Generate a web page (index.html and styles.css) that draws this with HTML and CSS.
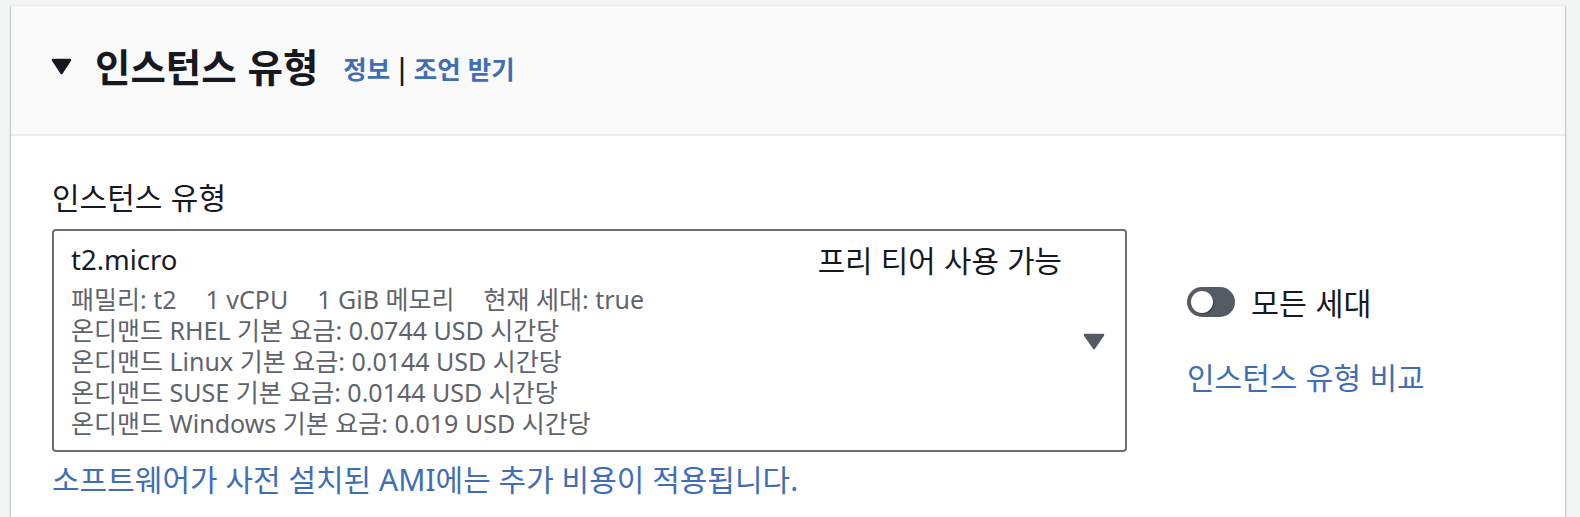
FILE: index.html
```html
<!DOCTYPE html>
<html lang="ko">
<head>
<meta charset="utf-8">
<title>인스턴스 유형</title>
<link rel="stylesheet" href="styles.css">
</head>
<body>
<section class="card">
  <header class="card-header">
    <svg class="expand-icon" width="21" height="17" viewBox="0 0 21 17" aria-hidden="true">
      <polygon points="2,2 19,2 10.5,15" fill="#16191f" stroke="#16191f" stroke-width="2.5" stroke-linejoin="round"/>
    </svg>
    <h2 class="title">인스턴스 유형</h2>
    <span class="header-links"><a class="link-strong" href="#">정보</a><span class="sep">|</span><a class="link-strong" href="#">조언 받기</a></span>
  </header>
  <div class="card-body">
    <div class="field-label">인스턴스 유형</div>
    <div class="field-row">
      <div class="field-main">
        <div class="select">
          <div class="select-main">
            <div class="select-top">
              <span class="select-value">t2.micro</span>
              <span class="select-tag">프리 티어 사용 가능</span>
            </div>
            <div class="select-detail">
              <div class="detail-tags"><span>패밀리: t2</span><span>1 vCPU</span><span>1 GiB 메모리</span><span>현재 세대: true</span></div>
              <div>온디맨드 RHEL 기본 요금: 0.0744 USD 시간당</div>
              <div>온디맨드 Linux 기본 요금: 0.0144 USD 시간당</div>
              <div>온디맨드 SUSE 기본 요금: 0.0144 USD 시간당</div>
              <div>온디맨드 Windows 기본 요금: 0.019 USD 시간당</div>
            </div>
          </div>
          <div class="caret-box">
            <svg width="22" height="17" viewBox="0 0 22 17" aria-hidden="true">
              <polygon points="2,2 20,2 11,15" fill="#545b64" stroke="#545b64" stroke-width="2.5" stroke-linejoin="round"/>
            </svg>
          </div>
        </div>
        <a class="link" href="#">소프트웨어가 사전 설치된 AMI에는 추가 비용이 적용됩니다.</a>
      </div>
      <div class="field-side">
        <label class="toggle-row">
          <span class="toggle"><span class="knob"></span></span>
          <span class="toggle-label">모든 세대</span>
        </label>
        <a class="link" href="#">인스턴스 유형 비교</a>
      </div>
    </div>
  </div>
</section>
</body>
</html>
```

FILE: styles.css
```css
html, body {
  margin: 0;
  padding: 0;
}
body {
  background: #f2f3f3;
  font-family: "Noto Sans", "Noto Sans CJK KR", sans-serif;
  color: #16191f;
  padding: 5px 15px 0 11px;
  height: 512px;
  overflow: hidden;
}
a {
  text-decoration: none;
}
.card {
  background: #ffffff;
  box-shadow: 0 1px 1px 0 rgba(0, 28, 36, 0.3), 1px 1px 1px 0 rgba(0, 28, 36, 0.15), -1px 1px 1px 0 rgba(0, 28, 36, 0.15);
  border-top: 1px solid #eaeded;
  min-height: 520px;
}
.card-header {
  background: #fafafa;
  border-bottom: 2px solid #eaeded;
  display: flex;
  align-items: center;
  height: 130px;
  padding: 0 0 10px 40px;
  box-sizing: border-box;
}
.expand-icon {
  display: block;
  margin-right: 23px;
  margin-top: 2px;
}
.title {
  margin: 0;
  font-size: 38.5px;
  font-weight: 700;
  line-height: 46px;
  font-family: "Noto Sans CJK KR", sans-serif;
}
.header-links {
  margin-left: 25px;
  margin-top: 6px;
  font-size: 25.5px;
  font-weight: 700;
  line-height: 34px;
  font-family: "Noto Sans CJK KR", sans-serif;
}
.link-strong {
  color: #3f6eb6;
}
.sep {
  color: #16191f;
  margin: 0 8px;
}
.card-body {
  padding: 42px 40px 0 41px;
}
.field-label {
  font-size: 30px;
  line-height: 36px;
  font-family: "Noto Sans CJK KR", sans-serif;
  margin-bottom: 15px;
}
.field-row {
  display: flex;
  align-items: flex-start;
}
.field-main {
  width: 1075px;
}
.select {
  border: 2px solid #687078;
  border-radius: 4px;
  display: flex;
  align-items: center;
  padding: 9px 0 11px 17px;
}
.select-main {
  flex: 1;
}
.select-top {
  display: flex;
  justify-content: space-between;
  align-items: center;
  height: 38px;
  margin-bottom: 6px;
}
.select-value {
  font-size: 27.5px;
}
.select-tag {
  font-size: 29.8px;
  font-family: "Noto Sans CJK KR", sans-serif;
}
.select-detail {
  color: #5f646b;
  font-size: 25px;
  line-height: 31px;
}
.detail-tags {
  display: flex;
  gap: 29px;
}
.caret-box {
  width: 63px;
  display: flex;
  justify-content: center;
  padding-top: 4px;
}
.caret-box svg {
  display: block;
}
.link {
  display: block;
  color: #3f6eb6;
  font-size: 30px;
  line-height: 36px;
  margin-top: 10px;
}
.field-side {
  margin-left: 60px;
  padding-top: 55px;
  display: flex;
  flex-direction: column;
}
.toggle-row {
  display: flex;
  align-items: center;
  gap: 16px;
}
.toggle {
  width: 48px;
  height: 30px;
  border-radius: 15px;
  background: #545b64;
  display: flex;
  align-items: center;
  padding-left: 4px;
  box-sizing: border-box;
}
.knob {
  width: 22px;
  height: 22px;
  border-radius: 50%;
  background: #ffffff;
  box-shadow: 1px 1px 1px rgba(0, 0, 0, 0.35);
}
.toggle-label {
  font-size: 30.4px;
  line-height: 36px;
  font-family: "Noto Sans CJK KR", sans-serif;
}
.field-side .link {
  margin-top: 38px;
  font-size: 30px;
  font-family: "Noto Sans CJK KR", sans-serif;
}
```
